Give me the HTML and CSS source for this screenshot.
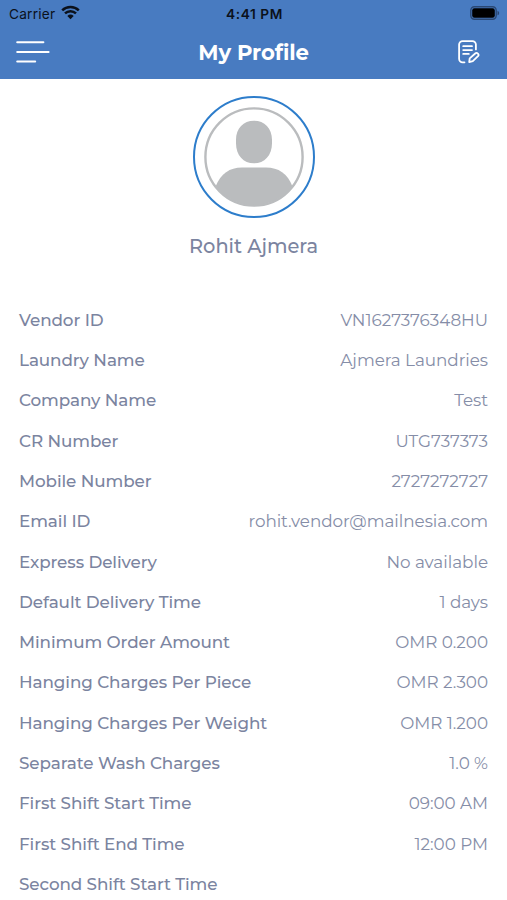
FILE: index.html
```
<!DOCTYPE html>
<html lang="en">
<head>
    <meta charset="UTF-8">
    <meta name="viewport" content="width=device-width, initial-scale=1.0">
    <title>My Profile</title>
    <link rel="stylesheet" href="styles.css">
</head>
<body>
    <header class="header">
        <div class="status-bar">
            <div class="carrier">
                <span>Carrier</span>
                <svg width="19" height="15" viewBox="0 0 19 15">
                    <path d="M1.2 5.3a12 12 0 0 1 16.6 0M4 8.4a8 8 0 0 1 11 0" fill="none" stroke="#0b111b" stroke-width="2.5"/>
                    <path d="M9.5 14.3l-3.2-3.4a4.7 4.7 0 0 1 6.4 0z" fill="#0b111b"/>
                </svg>
            </div>
            <span class="time">4:41 PM</span>
            <svg class="battery" width="30" height="14" viewBox="0 0 30 14">
                <rect x=".8" y=".8" width="25.4" height="12.4" rx="3.6" fill="none" stroke="#2a4874" stroke-width="1.4"/>
                <rect x="2.2" y="2.2" width="22.6" height="9.6" rx="2.2" fill="#000"/>
                <path d="M27.5 4.7c2.2.8 2.2 3.8 0 4.6z" fill="#2a4874"/>
            </svg>
        </div>
        <div class="nav-bar">
            <svg width="34" height="24" viewBox="0 0 34 24" fill="none" stroke="#fff" stroke-width="2" stroke-linecap="round">
                <path d="M1.2 2.2h26.2M1.2 12h31.4M1.2 21.6h18"/>
            </svg>
            <h1>My Profile</h1>
            <svg width="22" height="24" viewBox="0 0 22 24" fill="none" stroke="#fff" stroke-width="1.8" stroke-linecap="round" stroke-linejoin="round">
                <path d="M6.5 22.3H4.6A3.5 3.5 0 0 1 1.1 18.8V4.6A3.5 3.5 0 0 1 4.6 1.1h9.8a3.5 3.5 0 0 1 3.5 3.5v4.8"/>
                <path d="M5.2 6.2h8.8M5.2 10.1h8.8M5.2 13.9h5.6"/>
                <path d="M11.2 22.1l.5-3.7 5.5-4.9c1.8-1.6 4.4 1 2.8 2.7l-5.2 5z"/>
            </svg>
        </div>
    </header>

    <section class="profile">
        <div class="avatar">
            <svg width="100" height="100" viewBox="0 0 100 100">
                <path d="M11.5 79.5C17 66.5 25.5 60.5 38 60.5h24c12.5 0 21.5 6 26.5 19A49 49 0 0 1 11.5 79.5z" fill="#babcbe"/>
                <path d="M50 13.7c10.5 0 18 7.6 18 19v3.5c0 12-7.5 20.1-18 20.1s-18-8.1-18-20.1v-3.5c0-11.4 7.5-19 18-19z" fill="#babcbe"/>
                <circle cx="50" cy="50" r="48.6" fill="none" stroke="#babcbe" stroke-width="2.4"/>
            </svg>
        </div>
        <h2>Rohit Ajmera</h2>
    </section>

    <dl class="details">
        <div class="row"><dt>Vendor ID</dt><dd>VN1627376348HU</dd></div>
        <div class="row"><dt>Laundry Name</dt><dd>Ajmera Laundries</dd></div>
        <div class="row"><dt>Company Name</dt><dd>Test</dd></div>
        <div class="row"><dt>CR Number</dt><dd>UTG737373</dd></div>
        <div class="row"><dt>Mobile Number</dt><dd>2727272727</dd></div>
        <div class="row"><dt>Email ID</dt><dd>rohit.vendor@mailnesia.com</dd></div>
        <div class="row"><dt>Express Delivery</dt><dd>No available</dd></div>
        <div class="row"><dt>Default Delivery Time</dt><dd>1 days</dd></div>
        <div class="row"><dt>Minimum Order Amount</dt><dd>OMR 0.200</dd></div>
        <div class="row"><dt>Hanging Charges Per Piece</dt><dd>OMR 2.300</dd></div>
        <div class="row"><dt>Hanging Charges Per Weight</dt><dd>OMR 1.200</dd></div>
        <div class="row"><dt>Separate Wash Charges</dt><dd>1.0 %</dd></div>
        <div class="row"><dt>First Shift Start Time</dt><dd>09:00 AM</dd></div>
        <div class="row"><dt>First Shift End Time</dt><dd>12:00 PM</dd></div>
        <div class="row"><dt>Second Shift Start Time</dt><dd></dd></div>
    </dl>
</body>
</html>
```
FILE: styles.css
```
* {
    box-sizing: border-box;
}
body {
    margin: 0;
    height: 900px;
    overflow: hidden;
    font-family: Montserrat, Inter, sans-serif;
    background: #fff;
    color: #7b84a0;
}
.header {
    height: 79px;
    background: #487bc1;
}
.status-bar {
    display: grid;
    grid-template-columns: 1fr auto 1fr;
    align-items: center;
    height: 27px;
    padding: 0 7px 0 9px;
    font-family: Inter, sans-serif;
    font-size: 13.7px;
    color: #0b111b;
}
.carrier {
    display: flex;
    align-items: center;
    gap: 6px;
    letter-spacing: 0.2px;
}
.carrier svg {
    margin-top: -2px;
}
.time {
    font-weight: 600;
    letter-spacing: 0.6px;
}
.battery {
    justify-self: end;
    margin-top: -1px;
}
.nav-bar {
    display: flex;
    align-items: center;
    justify-content: space-between;
    height: 50px;
    padding: 0 27px 0 16px;
}
.nav-bar h1 {
    margin: 0;
    padding-right: 1px;
    font-size: 21.2px;
    font-weight: 700;
    letter-spacing: -0.1px;
    color: #fff;
}
.profile {
    display: flex;
    flex-direction: column;
    align-items: center;
    height: 220.6px;
    padding-top: 17px;
}
.avatar {
    display: flex;
    align-items: center;
    justify-content: center;
    width: 122px;
    height: 122px;
    border: 2px solid #2d7dcb;
    border-radius: 50%;
}
.profile h2 {
    margin: 15px 0 0;
    font-size: 19.4px;
    line-height: 26px;
    font-weight: 500;
}
.details {
    margin: 0;
    padding: 0 19px;
}
.row {
    display: flex;
    align-items: center;
    justify-content: space-between;
    height: 40.3px;
    font-size: 16.8px;
}
.row dt {
    font-weight: 500;
    letter-spacing: -0.08px;
}
.row dd {
    margin: 0;
    font-weight: 400;
    letter-spacing: -0.03px;
    color: #858da7;
}
```
